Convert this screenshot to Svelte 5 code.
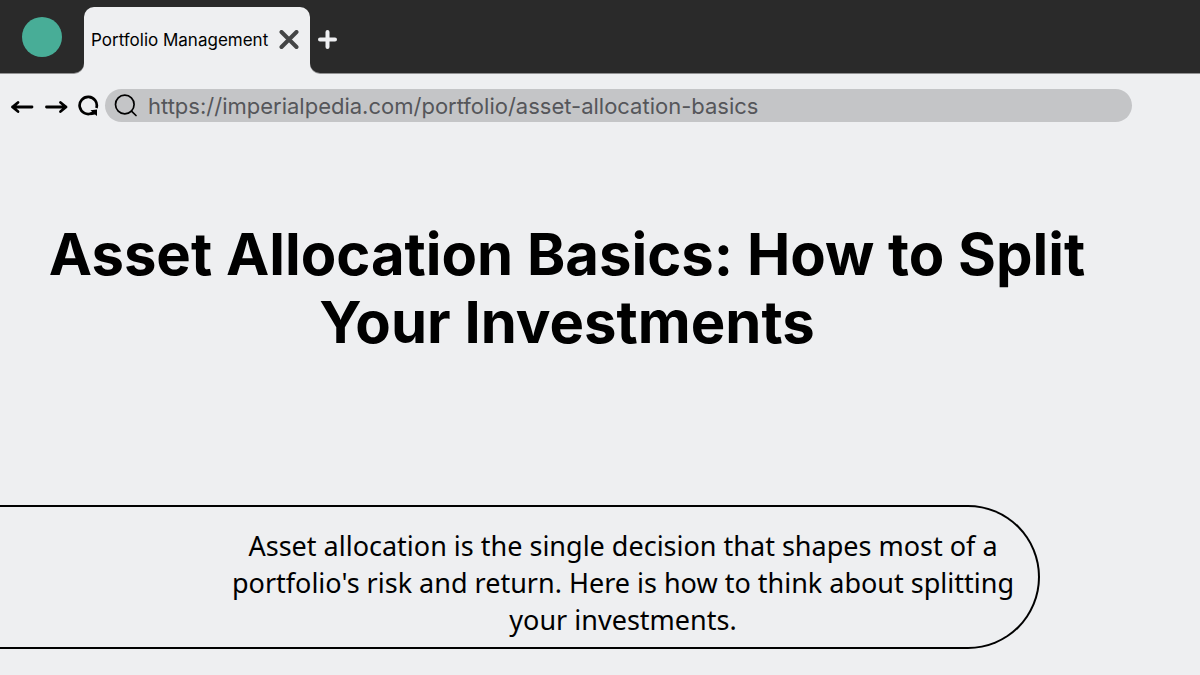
<script lang="ts">
  let url = $state('https://imperialpedia.com/portfolio/asset-allocation-basics')
</script>

<div class="browser">
  <header class="tabs">
    <div class="profile"><span class="avatar"></span></div>
    <div class="tab-slot">
      <div class="tab">
        <span class="tab-title">Portfolio Management</span>
        <button aria-label="Close tab">
          <svg width="20" height="20" viewBox="0 0 20 20" stroke="#444546" stroke-width="4" stroke-linecap="round">
            <path d="M2.5 2L17.5 17M17.5 2L2.5 17" />
          </svg>
        </button>
      </div>
    </div>
    <div class="strip">
      <button aria-label="New tab">
        <svg width="20" height="20" viewBox="0 0 20 20" stroke="#eeeff1" stroke-width="4" stroke-linecap="round">
          <path d="M9.5 2V17M2 9.500H17" />
        </svg>
      </button>
    </div>
  </header>

  <nav class="toolbar">
    <button aria-label="Back">
      <svg width="24" height="16" viewBox="0 0 24 16" fill="none" stroke="#000" stroke-width="2.8" stroke-linecap="round" stroke-linejoin="round">
        <path d="M22 9H2.5M8 4.500L2.500 9L8 13.500" />
      </svg>
    </button>
    <button aria-label="Forward">
      <svg width="24" height="16" viewBox="0 0 24 16" fill="none" stroke="#000" stroke-width="2.8" stroke-linecap="round" stroke-linejoin="round">
        <path d="M2.5 9H22M16.500 4.500L22 9L16.500 13.500" />
      </svg>
    </button>
    <button aria-label="Reload">
      <svg width="21" height="22" viewBox="0 0 21 22" fill="none">
        <path d="M14 18.1A8.600 8.600 0 1 1 18.400 13" stroke="#000" stroke-width="2.7" />
        <path d="M12.500 15.200L19 14.500V21L17 19.500L12.500 20.200V17.500L14 16.700Z" fill="#000" />
      </svg>
    </button>
    <label class="address">
      <svg width="24" height="24" viewBox="0 0 24 24" fill="none" stroke="#000" stroke-width="1.7" stroke-linecap="round">
        <circle cx="10.8" cy="10.5" r="9.3" />
        <path d="M17.5 17.2L22 21.5" />
      </svg>
      <input type="text" aria-label="Address" bind:value={url} />
    </label>
  </nav>

  <main>
    <h1>Asset Allocation Basics: How to Split Your Investments</h1>
    <div class="summary">
      <p>
        Asset allocation is the single decision that shapes most of a portfolio's risk and return.
        Here is how to think about splitting your investments.
      </p>
    </div>
  </main>
</div>

<style>
  :global(body) {
    margin: 0;
    background: #eeeff1;
  }

  .browser {
    font-family: Inter, 'Liberation Sans', sans-serif;
    color: #000;
    overflow: hidden;
  }

  button {
    display: flex;
    padding: 0;
    border: none;
    background: none;
    cursor: pointer;
  }

  .tabs {
    display: flex;
    height: 73px;
  }

  .profile,
  .strip {
    display: flex;
    align-items: center;
    background: #2a2a2a;
    box-shadow: 0 1px 0 #929293;
  }

  .profile {
    box-sizing: border-box;
    width: 84px;
    padding-left: 22px;
    border-bottom-right-radius: 10px;
  }

  .avatar {
    width: 40px;
    height: 40px;
    border-radius: 50%;
    background: #48ad97;
  }

  .strip {
    flex: 1;
    padding: 6px 8px 0;
    border-bottom-left-radius: 10px;
  }

  .tab-slot {
    display: flex;
    padding-top: 7px;
    background: linear-gradient(#2a2a2a 30px, #eeeff1 30px);
  }

  .tab {
    display: flex;
    align-items: center;
    justify-content: space-between;
    box-sizing: border-box;
    width: 226px;
    padding: 0 11px 0 7px;
    border-radius: 10px 10px 0 0;
    background: #eeeff1;
  }

  .tab-title {
    font-size: 17px;
    white-space: nowrap;
  }

  .toolbar {
    display: flex;
    align-items: center;
    gap: 10px;
    padding: 16px 68px 0 10px;
  }

  .address {
    display: flex;
    align-items: center;
    flex: 1;
    gap: 10px;
    height: 33px;
    margin-left: -4px;
    padding: 0 9px;
    box-sizing: border-box;
    border-radius: 17px;
    background: #c4c5c7;
  }

  input {
    flex: 1;
    min-width: 0;
    padding: 0;
    border: none;
    outline: none;
    background: none;
    font: inherit;
    font-size: 22px;
    color: #55565a;
  }

  h1 {
    margin: 98px 68px 0 2px;
    font-size: 58px;
    line-height: 68px;
    font-weight: 700;
    text-align: center;
  }

  .summary {
    display: flex;
    justify-content: flex-end;
    box-sizing: border-box;
    margin: 149px 160px 0 0;
    padding: 20px 15px 9px;
    border: 2px solid #000;
    border-left: none;
    border-radius: 0 72px 72px 0;
  }

  p {
    max-width: 800px;
    margin: 0;
    font-family: 'Noto Sans', sans-serif;
    font-size: 27px;
    line-height: 37px;
    text-align: center;
  }
</style>
